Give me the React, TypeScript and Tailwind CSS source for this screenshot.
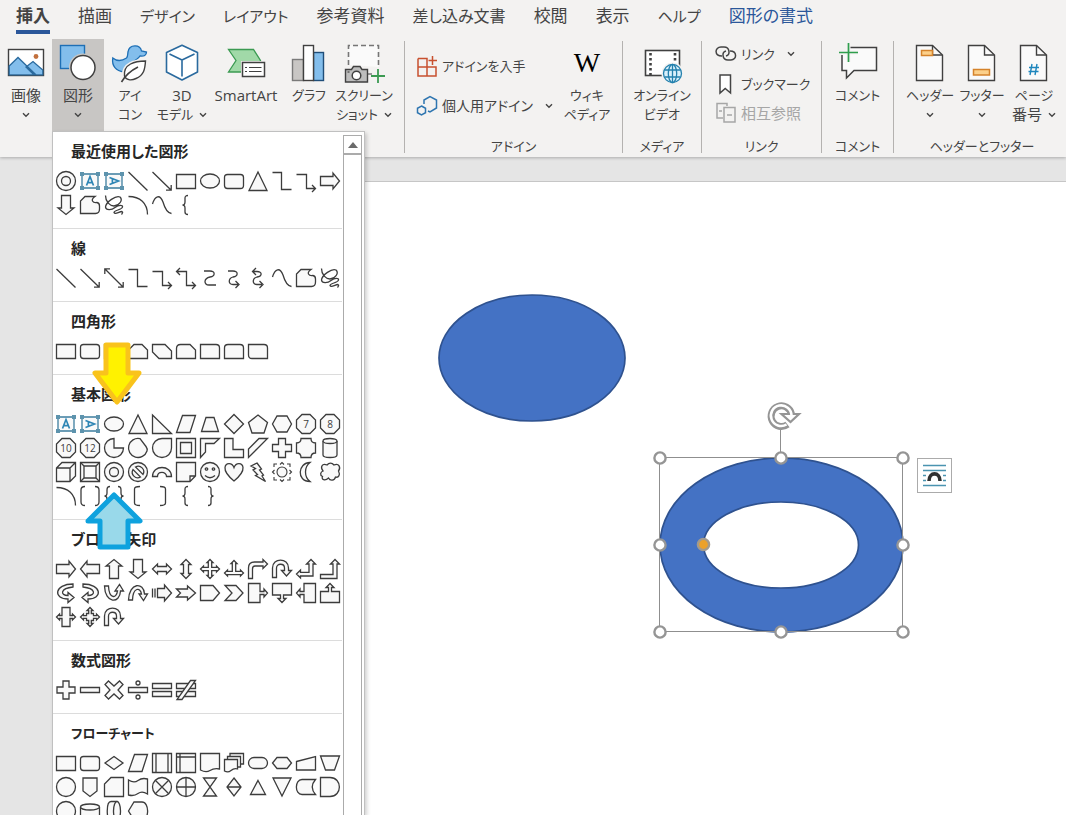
import React from 'react';

const INK = '#404040';

/* ---------- ribbon icons, 40 x 40 ---------- */

const ribbonIcons: Record<string, React.ReactNode> = {
  picture: (
    <>
      <rect x="2.5" y="6.5" width="35" height="26" fill="#fff" stroke={INK} strokeWidth="1.4" />
      <path d="M3.2 23 L12 14.5 L30 31.8 H3.2z M20 24 L27 18.5 L36.8 27 V31.8 H28z" fill="#83beec" stroke="#2a6a9e" strokeWidth="1.3" />
      <circle cx="30" cy="13.5" r="2.4" fill="#c2703d" />
    </>
  ),
  shapes: (
    <>
      <rect x="2.5" y="2.5" width="24" height="23" fill="#83beec" stroke="#1e6fb5" strokeWidth="1.4" />
      <circle cx="25" cy="24.5" r="14" fill="#c8c6c4" />
      <circle cx="25" cy="24.5" r="12" fill="#fff" stroke={INK} strokeWidth="1.5" />
    </>
  ),
  icons: (
    <>
      <path
        d="M2.8 15 C7 18.5 12 18 16.5 15 C18 13.5 17.5 11.5 18 9 C18.5 5 21.5 2.8 25 2.8 C28.5 2.8 31 5 31.5 8 L36.5 9 C36.5 12.5 34 13.5 30 13 C28 16 26 17 21 20 C15 24 14.5 26 14 29 C6 28 1.5 23 2.8 15z"
        fill="#83beec"
        stroke="#1e6fb5"
        strokeWidth="1.3"
      />
      <path d="M35.5 18 C25 18 13 21 14 33 C14.5 37 21 38 26 35.5 C34 32 35 26 35.5 18z" fill="#fff" stroke="#f3f2f1" strokeWidth="4" />
      <path d="M35.5 18 C25 18 13 21 14.5 33 C16 37 21 38 26 35.5 C34 32 35 26 35.5 18z" fill="#fff" stroke={INK} strokeWidth="1.4" />
      <path d="M28 24 C20 28 15 33 11.5 39" fill="none" stroke={INK} strokeWidth="1.6" />
    </>
  ),
  cube: (
    <g fill="#fff" stroke="#2a6a9e" strokeWidth="1.6" strokeLinejoin="round">
      <path d="M20 2.2 L35.5 9.5 V29 L20 37 L4.5 29 V9.5z" />
      <path d="M7.5 11 L20 17 L32.5 11 M20 17 V33.5" fill="none" />
    </g>
  ),
  smartart: (
    <>
      <path d="M2.5 6.5 H27.5 L34.5 17.5 L27 29 H2.5 L10 17.5z" fill="#a1d9a8" stroke="#3b9a52" strokeWidth="1.3" />
      <rect x="15" y="18" width="25" height="17" fill="#f3f2f1" />
      <rect x="16.5" y="19.5" width="22" height="14" fill="#fff" stroke={INK} strokeWidth="1.5" />
      <path d="M19 24.5h2M23 24.5h12.5M19 28.5h2M23 28.5h12.5" stroke={INK} strokeWidth="1.2" />
    </>
  ),
  chart: (
    <g stroke={INK} strokeWidth="1.4">
      <rect x="3.5" y="16.5" width="11" height="21" fill="#c8c6c4" stroke="#7a7a7a" />
      <rect x="24.5" y="9.5" width="10" height="28" fill="#83beec" stroke="#1f4e79" />
      <rect x="14.5" y="2.5" width="10" height="35" fill="#fff" />
    </g>
  ),
  screenshot: (
    <>
      <path d="M4.5 22 V2.5 H34.5 V24" fill="#fafafa" stroke="#767676" strokeWidth="1.6" strokeDasharray="5 3" />
      <path d="M24 31 H28" stroke="#767676" strokeWidth="1.5" />
      <path d="M1.5 26.5 H7.5 L9.5 23.5 H16 L18 26.5 H23.5 V39 H1.5z" fill="#bdbdbd" stroke={INK} strokeWidth="1.4" />
      <circle cx="12.5" cy="32.5" r="4.3" fill="#fff" stroke={INK} strokeWidth="1.5" />
      <path d="M3.5 29h2" stroke={INK} strokeWidth="1.2" />
      <path d="M34 26 V40 M27 33 H41" stroke="#3b9a52" strokeWidth="1.8" />
    </>
  ),
  video: (
    <>
      <rect x="3.5" y="7.5" width="34" height="25" fill="#fff" stroke={INK} strokeWidth="1.6" />
      <path d="M8.5 10 V32 M33 10 V20" stroke={INK} strokeWidth="2.6" strokeDasharray="2.6 2.4" />
      <circle cx="30.5" cy="30.5" r="11" fill="#f3f2f1" />
      <g fill="#d9f0fb" stroke="#2380ad" strokeWidth="1.3">
        <circle cx="30.5" cy="30.5" r="9" />
        <ellipse cx="30.5" cy="30.5" rx="4.2" ry="9" />
        <path d="M30.5 21.5 V39.5 M22.5 27 H38.5 M22.5 34 H38.5" fill="none" />
      </g>
    </>
  ),
  comment: (
    <>
      <path d="M10 4.5 H38.5 V27.5 H16 L8.5 35 V27.5 H4 V12" fill="#fafafa" stroke={INK} strokeWidth="1.5" />
      <path d="M10.5 0 V19 M1 9.5 H20" stroke="#f3f2f1" strokeWidth="4" />
      <path d="M10.5 0 V19 M1 9.5 H20" stroke="#2f9e4d" strokeWidth="1.7" />
    </>
  ),
  header: (
    <>
      <DocOutline />
      <rect x="11.5" y="7.5" width="11" height="5" fill="#fcd08a" stroke="#d5832b" strokeWidth="1.5" />
    </>
  ),
  footer: (
    <>
      <DocOutline />
      <rect x="11.5" y="26.5" width="16" height="5.5" fill="#fcd08a" stroke="#d5832b" strokeWidth="1.5" />
    </>
  ),
  pageNumber: (
    <>
      <DocOutline />
      <path d="M18 21 L16 32 M23 21 L21 32 M15 24.5 H25 M14.5 28.5 H24.5" stroke="#1e86bd" strokeWidth="1.4" />
    </>
  ),
};

function DocOutline() {
  return (
    <>
      <path d="M6.5 2.5 H22.5 L32.5 12 V37.5 H6.5z" fill="#fafafa" stroke={INK} strokeWidth="1.4" />
      <path d="M22.5 2.5 V12 H32" fill="none" stroke={INK} strokeWidth="1.4" />
    </>
  );
}

function Chevron() {
  return (
    <svg width="8" height="6" viewBox="0 0 8 6" className="shrink-0">
      <path d="M1 1.2 L4 4.2 L7 1.2" fill="none" stroke="#444" strokeWidth="1.4" />
    </svg>
  );
}

// kana-only labels are set smaller than labels with kanji or latin
const isKana = (text: string) => /^[\u3040-\u30ff]+$/.test(text);
const labelSize = (text: string) => (isKana(text) ? 'text-[13px]' : 'text-[15px]');

/* ---------- gallery shapes, drawn round 0,0 in a 24 x 24 cell ---------- */

const p = (d: string) => <path d={d} />;
const line = (d: string) => <path d={d} fill="none" />;
const ring = (r: number) => `M${-r} 0 A${r} ${r} 0 1 1 ${r} 0 A${r} ${r} 0 1 1 ${-r} 0z`;
const turn = (deg: number, node: React.ReactNode) => <g transform={`rotate(${deg})`}>{node}</g>;
const flip = (node: React.ReactNode) => <g transform="scale(-1 1)">{node}</g>;

const OCTAGON = 'M-4 -9.5 H4 L9.5 -4 V4 L4 9.5 H-4 L-9.5 4 V-4z';
const ARROW = 'M-9.5 -4.5 H3 V-8 L9.5 0 L3 8 V4.5 H-9.5z';
const DOUBLE_ARROW = 'M-9.5 0 L-4.5 -5 V-2.5 H4.5 V-5 L9.5 0 L4.5 5 V2.5 H-4.5 V5z';
const U_TURN = 'M-9.5 8.5 V-1 C-9.5 -11.5 6.5 -11.5 6.5 -1 V1.5 H9.5 L4.5 7 L-.5 1.5 H2.5 V-1 C2.5 -6 -5.5 -6 -5.5 -1 V8.5z';
const CURVED = 'M7 -9 C-12 -9 -13 6 2 6 V9.5 L8 4.5 L2 -.5 V2.5 C-6 2.5 -6 -4.5 7 -6z';
const CALLOUT_SIDE = 'M-9.5 -9.5 H2 V-1.5 H6 V-4 L9.5 0 L6 4 V1.5 H2 V9.5 H-9.5z';

const numbered = (n: string) => (
  <>
    {p(OCTAGON)}
    <text x="0" y="4" textAnchor="middle" fontSize="10" fill="#404040" stroke="none">
      {n}
    </text>
  </>
);

const textBoxFrame = (
  <>
    {p('M-8 -7 H8 V7 H-8z')}
    <path d="M-10 -9h4v4h-4z M6 -9h4v4h-4z M-10 5h4v4h-4z M6 5h4v4h-4z" fill="#5d93ad" stroke="none" />
  </>
);

const shapes: Record<string, React.ReactNode> = {
  donut: <>{p(ring(9.5))}{p(ring(4.5))}</>,
  textBox: (
    <g stroke="#3d7e9f">
      {textBoxFrame}
      <path d="M-3.5 4.5 L0 -4.5 L3.5 4.5 M-2.4 1.6 H2.4" fill="none" stroke="#2f86b5" strokeWidth="1.7" />
    </g>
  ),
  textBoxVertical: (
    <g stroke="#3d7e9f">
      {textBoxFrame}
      <path d="M-4.5 -3.5 L4.5 0 L-4.5 3.5 M-1.6 -2.4 V2.4" fill="none" stroke="#2f86b5" strokeWidth="1.7" />
    </g>
  ),
  line: line('M-9.5 -9 L9.5 9.5'),
  lineArrow: line('M-9.5 -9 L9 9 M9.2 4 V9.2 H4'),
  lineBoth: line('M-9 -9 L9 9 M9.2 4 V9.2 H4 M-9.2 -4 V-9.2 H-4'),
  rect: p('M-9.5 -6.5 H9.5 V7.5 H-9.5z'),
  roundRect: p('M-6.5 -6.5 H6.5 Q9.5 -6.5 9.5 -3.5 V4.5 Q9.5 7.5 6.5 7.5 H-6.5 Q-9.5 7.5 -9.5 4.5 V-3.5 Q-9.5 -6.5 -6.5 -6.5z'),
  ellipse: <ellipse rx="9.5" ry="7" />,
  triangle: p('M0 -9 L9 9.5 H-9z'),
  elbow: line('M-9.5 -8.5 H-.5 V8.5 H9.5'),
  elbowArrow: line('M-9.5 -6.5 H.5 V7.5 H9 M6 4 L9.5 7.5 L6 11'),
  elbowBoth: line('M-9 -6.5 H.5 V7.5 H9 M6 4 L9.5 7.5 L6 11 M-6 -10 L-9.5 -6.5 L-6 -3'),
  arrowRight: p(ARROW),
  arrowLeft: turn(180, p(ARROW)),
  arrowUp: turn(-90, p(ARROW)),
  arrowDown: turn(90, p(ARROW)),
  freeform: p('M-9.5 8.5 V-4 L-5 -8.5 H5 Q1.5 -6 2.5 -4 Q3.5 -2 7 -2.5 Q9.5 -2 9.5 1 V4 Q9.5 8.5 5.5 8.5z'),
  scribble: line('M-8.5 -9.5 C-8.5 -3 -4 1 0 1 C6 0 9 -5 6 -8 C2 -10 -8 -3 -8.5 2 C-8 6 -2 5 1 2.5 C5 -.5 9 0 8.5 2 C8 5 0 5 0 7.5 C1 10 5 6.5 8 6.5 Q9.5 7 7.5 9.5'),
  arc: line('M-9.5 -8.5 C2 -8.5 9.5 -2 9.5 9.5'),
  curve: line('M-9.5 -1 C-7 -9.5 -2 -11 1 -3 C3 4 5 8 9.5 8.5'),
  sCurve: line('M-6 -7 H0 C5.5 -7 5.5 -2 0 -1 C-6.5 .5 -6.5 7 -1 7 H6'),
  sCurveArrow: line('M-6 -7 H-1 C4.5 -7 4.5 -2 -1 -1 C-6 .5 -6 6.5 -1 6.5 H4 M1.5 3 L5 6.5 L1.5 10'),
  sCurveBoth: line('M-4.5 -6.5 H-1 C4.5 -6.5 4.5 -2 -1 -1 C-6 .5 -6 6.5 -1 6.5 H4 M1.5 3 L5 6.5 L1.5 10 M-2 -10 L-5.5 -6.5 L-2 -3'),
  snipOne: p('M-9.5 -6.5 H4 L9.5 -1 V7.5 H-9.5z'),
  snipTwo: p('M-4 -6.5 H4 L9.5 -1 V7.5 H-9.5 V-1z'),
  snipDiagonal: p('M-9.5 -6.5 H3 L9.5 0 V7.5 H-3 L-9.5 1z'),
  snipRound: p('M-9.5 7.5 V-2.5 Q-9.5 -6.5 -5.5 -6.5 H4 L9.5 -1 V7.5z'),
  roundOne: p('M-9.5 -6.5 H6 Q9.5 -6.5 9.5 -3 V7.5 H-9.5z'),
  roundTwo: p('M-9.5 7.5 V-3 Q-9.5 -6.5 -6 -6.5 H6 Q9.5 -6.5 9.5 -3 V7.5z'),
  roundDiagonal: p('M-9.5 -6.5 H6 Q9.5 -6.5 9.5 -3 V7.5 H-6 Q-9.5 7.5 -9.5 4z'),
  rightTriangle: p('M-9.5 -9 L9.5 9.5 H-9.5z'),
  parallelogram: p('M-3.5 -8.5 H9.5 L4 8.5 H-9.5z'),
  trapezoid: p('M-4 -6.5 H4 L8.5 7.5 H-8.5z'),
  diamond: p('M0 -9.5 L9.5 0 L0 9.5 L-9.5 0z'),
  pentagon: p('M0 -9 L9.5 -1.5 L6 9 H-6 L-9.5 -1.5z'),
  hexagon: p('M-5 -8 H5 L9.5 0 L5 8 H-5 L-9.5 0z'),
  heptagon: numbered('7'),
  octagon: numbered('8'),
  decagon: numbered('10'),
  dodecagon: numbered('12'),
  pie: p('M0 -9.5 A9.5 9.5 0 1 0 9.5 0 H0z'),
  chord: p('M2 -9.3 A9.5 9.5 0 1 0 9 3 Q9.8 1 8 -1.5z'),
  teardrop: p('M9.5 -9.5 V0 A9.5 9.5 0 1 1 0 -9.5z'),
  frame: <>{p('M-9.5 -9.5 H9.5 V9.5 H-9.5z')}{p('M-5.5 -5.5 H5.5 V5.5 H-5.5z')}</>,
  halfFrame: p('M-9.5 -9.5 H9.5 L4 -4.5 H-4.5 V4 L-9.5 9.5z'),
  lShape: p('M-9.5 -9.5 H-1 V1.5 H9.5 V9.5 H-9.5z'),
  diagonalStripe: p('M1 -9.5 H9.5 L-9.5 9.5 V1z'),
  cross: p('M-3.5 -9.5 H3.5 V-3.5 H9.5 V3.5 H3.5 V9.5 H-3.5 V3.5 H-9.5 V-3.5 H-3.5z'),
  plaque: p('M-5 -9.5 H5 Q5 -5 9.5 -5 V5 Q5 5 5 9.5 H-5 Q-5 5 -9.5 5 V-5 Q-5 -5 -5 -9.5z'),
  can: <>{p('M-7 -7 V7 Q-7 9.5 0 9.5 Q7 9.5 7 7 V-7')}<ellipse cy="-7" rx="7" ry="2.5" /></>,
  cube: p('M-9.5 -4 L-4 -9.5 H9.5 V4 L4 9.5 H-9.5z M-9.5 -4 H4 V9.5 M4 -4 L9.5 -9.5'),
  bevel: <>{p('M-9.5 -9.5 H9.5 V9.5 H-9.5z')}{p('M-6 -6 H6 V6 H-6z')}{line('M-9.5 -9.5 L-6 -6 M9.5 -9.5 L6 -6 M-9.5 9.5 L-6 6 M9.5 9.5 L6 6')}</>,
  no: <>{p(ring(9.5))}{p('M-2.5 -5 A5.5 5.5 0 0 1 5 2.5z')}{p('M2.5 5 A5.5 5.5 0 0 1 -5 -2.5z')}</>,
  blockArc: p('M-9.5 4.5 C-9.5 -7.5 9.5 -7.5 9.5 4.5 H4.5 C4.5 -1 -4.5 -1 -4.5 4.5z'),
  foldedCorner: p('M-9.5 -9.5 H9.5 V4 L4 9.5 H-9.5z M4 9.5 V4 H9.5'),
  smile: <>{p(ring(9.5))}{line('M-5 3.5 Q0 8 5 3.5')}<circle cx="-3.5" cy="-3" r="1.2" /><circle cx="3.5" cy="-3" r="1.2" /></>,
  heart: p('M0 9 C-6 4 -9.5 0 -9 -4.5 C-8.5 -9.5 -2 -10 0 -4.5 C2 -10 8.5 -9.5 9 -4.5 C9.5 0 6 4 0 9z'),
  bolt: p('M-1 -9 L3.5 -3 L1.5 -2 L5.5 3 L4 4 L7.5 9.5 L-2.5 3.5 L-.5 2.5 L-5 -2 L-2.5 -3.5 L-7 -6z'),
  sun: (
    <g strokeWidth="1.1">
      <circle r="5" />
      {[0, 90, 180, 270].map((a) => (
        <g key={a} transform={`rotate(${a})`}>
          {line('M-2 -7.5 L0 -9.5 L2 -7.5 M5 -8 L8 -8 L8 -5')}
        </g>
      ))}
    </g>
  ),
  moon: p('M4 -9.5 C-8 -9.5 -10 9.5 4 9.5 C-2 5 -2 -5 4 -9.5z'),
  cloud: p('M-7 -1 C-10 -5 -8 -9 -3 -7 C-1 -9.5 2 -9.5 4 -7 C9 -9.5 11 -4 8.5 -1 C10.5 3 8.5 6 5.5 5 C4.5 9 0 9 -1.5 6 C-5 9.5 -9 7.5 -7.5 4.5 C-10.5 3 -9.5 0 -7 -1z'),
  bracketPair: line('M-5 -9.5 Q-9 -9.5 -9 -6 V6 Q-9 9.5 -5 9.5 M5 -9.5 Q9 -9.5 9 -6 V6 Q9 9.5 5 9.5'),
  bracePair: line('M-4 -9.5 Q-7 -9.5 -7 -6 V-3 Q-7 0 -9.5 0 Q-7 0 -7 3 V6 Q-7 9.5 -4 9.5 M4 -9.5 Q7 -9.5 7 -6 V-3 Q7 0 9.5 0 Q7 0 7 3 V6 Q7 9.5 4 9.5'),
  bracketLeft: line('M2 -9.5 Q-3.5 -9.5 -3.5 -7 V7 Q-3.5 9.5 2 9.5'),
  bracketRight: line('M-2 -9.5 Q3.5 -9.5 3.5 -7 V7 Q3.5 9.5 -2 9.5'),
  braceLeft: line('M2 -9.5 Q-1 -9.5 -1 -7 V-3 Q-1 0 -3.5 0 Q-1 0 -1 3 V7 Q-1 9.5 2 9.5'),
  braceRight: line('M-2 -9.5 Q1 -9.5 1 -7 V-3 Q1 0 3.5 0 Q1 0 1 3 V7 Q1 9.5 -2 9.5'),
  arrowLeftRight: p(DOUBLE_ARROW),
  arrowUpDown: turn(90, p(DOUBLE_ARROW)),
  arrowQuad: p('M0 -9.5 L3 -6.5 H1.7 V-1.7 H6.5 V-3 L9.5 0 L6.5 3 V1.7 H1.7 V6.5 H3 L0 9.5 L-3 6.5 H-1.7 V1.7 H-6.5 V3 L-9.5 0 L-6.5 -3 V-1.7 H-1.7 V-6.5 H-3z'),
  arrowTriple: p('M0 -8.5 L3 -5.5 H1.7 V2.3 H6.5 V1 L9.5 4 L6.5 7 V5.7 H-6.5 V7 L-9.5 4 L-6.5 1 V2.3 H-1.7 V-5.5 H-3z'),
  arrowBent: p('M-9.5 9.5 V-1 Q-9.5 -7 -3.5 -7 H5 V-9.5 L9.5 -5 L5 -.5 V-3 H-3 Q-5.5 -3 -5.5 0 V9.5z'),
  arrowUTurn: p(U_TURN),
  arrowLeftUp: p('M-9.5 5 L-5.5 1 V3.3 H3 V-5 H.5 L5 -9.5 L9.5 -5 H7 V7 H-5.5 V9z'),
  arrowBentUp: p('M-9.5 5.5 H3 V-5 H.5 L5 -9.5 L9.5 -5 H7 V9.5 H-9.5z'),
  arrowCurvedRight: p(CURVED),
  arrowCurvedLeft: flip(p(CURVED)),
  arrowCurvedUp: p('M-9.5 -7 C-9 11 6 11 6.5 -2 H9.5 L5.5 -8.5 L1 -2 H3.5 C2.5 6 -5 6 -5.5 -7z'),
  arrowCurvedDown: p('M-9.5 7 C-9 -11 6 -11 6.5 1 H9.5 L5.5 7.5 L1 1 H3.5 C2.5 -6 -5 -6 -5.5 7z'),
  arrowStriped: p('M-9.5 -4.5 V4.5 M-7 -4.5 V4.5 M-4.5 -4.5 H2.5 V-8 L9.5 0 L2.5 8 V4.5 H-4.5z'),
  arrowNotched: p('M-9.5 -4 H1.5 V-7 L9.5 0 L1.5 7 V4 H-9.5 L-5.5 0z'),
  arrowPentagon: p('M-9.5 -7.5 H3 L9.5 0 L3 7.5 H-9.5z'),
  chevron: p('M-9 -7.5 H2 L9 0 L2 7.5 H-9 L-2 0z'),
  calloutRight: p(CALLOUT_SIDE),
  calloutDown: p('M-9.5 -9.5 H9.5 V2 H1.5 V5.5 H4 L0 9.5 L-4 5.5 H-1.5 V2 H-9.5z'),
  calloutLeft: flip(p(CALLOUT_SIDE)),
  calloutUp: p('M-9.5 9.5 H9.5 V-1.5 H1.5 V-5.5 H4 L0 -9.5 L-4 -5.5 H-1.5 V-1.5 H-9.5z'),
  calloutLeftRight: p('M-4 -9.5 H4 V-1.5 H6.5 V-3 L9.5 0 L6.5 3 V1.5 H4 V9.5 H-4 V1.5 H-6.5 V3 L-9.5 0 L-6.5 -3 V-1.5 H-4z'),
  calloutQuad: p('M-3.5 -3.5 H-1.3 V-6.5 H-3 L0 -9.5 L3 -6.5 H1.3 V-3.5 H3.5 V-1.3 H6.5 V-3 L9.5 0 L6.5 3 V1.3 H3.5 V3.5 H1.3 V6.5 H3 L0 9.5 L-3 6.5 H-1.3 V3.5 H-3.5 V1.3 H-6.5 V3 L-9.5 0 L-6.5 -3 V-1.3 H-3.5z'),
  arrowCircular: p(U_TURN),
  mathPlus: p('M-3 -9 H3 V-3 H9 V3 H3 V9 H-3 V3 H-9 V-3 H-3z'),
  mathMinus: p('M-9.5 -2.5 H9.5 V2.5 H-9.5z'),
  mathMultiply: p('M-5.5 -9 L0 -4 L5.5 -9 L9 -5.5 L4 0 L9 5.5 L5.5 9 L0 4 L-5.5 9 L-9 5.5 L-4 0 L-9 -5.5z'),
  mathDivide: <>{p('M-9.5 -2.5 H9.5 V2.5 H-9.5z')}<circle cy="-7" r="2" /><circle cy="7" r="2" /></>,
  mathEqual: p('M-9.5 -6.5 H9.5 V-1.5 H-9.5z M-9.5 1.5 H9.5 V6.5 H-9.5z'),
  mathNotEqual: <>{p('M-9.5 -6.5 H9.5 V-1.5 H-9.5z M-9.5 1.5 H9.5 V6.5 H-9.5z')}{p('M4.5 -9.5 H9.5 L-4 9.5 H-9z')}</>,
  flowDecision: p('M0 -6.5 L9 0 L0 6.5 L-9 0z'),
  flowPredefined: p('M-9.5 -9.5 H9.5 V9.5 H-9.5z M-6 -9.5 V9.5 M6 -9.5 V9.5'),
  flowInternal: p('M-9.5 -9.5 H9.5 V9.5 H-9.5z M-6 -9.5 V9.5 M-9.5 -6 H9.5'),
  flowDocument: p('M-9.5 -9.5 H9.5 V6 Q4 5 0 7.5 T-9.5 7z'),
  flowMultidocument: <>{p('M-4 -9.5 H9.5 V1 H-4z')}{p('M-6.5 -6.5 H6.5 V4 H-6.5z')}{p('M-9.5 -3.5 H3.5 V6 Q0 5 -3 7.5 T-9.5 8z')}</>,
  flowTerminator: <rect x="-9.5" y="-5.5" width="19" height="11" rx="5.5" />,
  flowPreparation: p('M-5 -5.5 H5 L9.5 0 L5 5.5 H-5 L-9.5 0z'),
  flowManualInput: p('M-9.5 -1.5 L9.5 -6.5 V7 H-9.5z'),
  flowManualOperation: p('M-9.5 -7 H9.5 L4.5 7 H-4.5z'),
  circle: <circle r="9.5" />,
  flowOffPage: p('M-7 -9 H7 V4 L0 9.5 L-7 4z'),
  flowCard: p('M-3 -9.5 H9.5 V9.5 H-9.5 V-3z'),
  flowTape: p('M-9.5 -7 Q-4 -3.5 0 -6.5 T9.5 -8 V7 Q4 3.5 0 6.5 T-9.5 8z'),
  flowSumming: <>{p(ring(9.5))}{line('M-6.7 -6.7 L6.7 6.7 M6.7 -6.7 L-6.7 6.7')}</>,
  flowOr: <>{p(ring(9.5))}{line('M0 -9.5 V9.5 M-9.5 0 H9.5')}</>,
  flowCollate: p('M-6.5 -9 H6.5 L-6.5 9 H6.5z'),
  flowSort: p('M0 -9 L7 0 L0 9 L-7 0z M-7 0 H7'),
  flowExtract: p('M0 -6.5 L7.5 7.5 H-7.5z'),
  flowMerge: p('M-9 -9 H9 L0 9z'),
  flowStored: p('M-4 -7.5 H9.5 Q3 0 9.5 7.5 H-4 C-11.5 7.5 -11.5 -7.5 -4 -7.5z'),
  flowDelay: p('M-9.5 -9.5 H0 C12.5 -9.5 12.5 9.5 0 9.5 H-9.5z'),
  flowDisk: <>{p('M-9.5 -4 V6 Q-9.5 9 0 9 T9.5 6 V-4')}<ellipse cy="-4" rx="9.5" ry="3" /></>,
  flowDirect: <>{p('M3.5 -9.5 H-3 C-8 -9.5 -8 9.5 -3 9.5 H3.5')}<ellipse cx="3" rx="3.5" ry="9.5" /></>,
  flowDisplay: p('M-9.5 0 L-4 -9 H4 C11.5 -9 11.5 9 4 9 H-4z'),
};

interface GallerySection {
  title: string;
  items: string[];
}

const gallery: GallerySection[] = [
  {
    title: '最近使用した図形',
    items: [
      'donut', 'textBox', 'textBoxVertical', 'line', 'lineArrow', 'rect', 'ellipse', 'roundRect', 'triangle', 'elbow', 'elbowArrow', 'arrowRight',
      'arrowDown', 'freeform', 'scribble', 'arc', 'curve', 'braceLeft',
    ],
  },
  {
    title: '線',
    items: ['line', 'lineArrow', 'lineBoth', 'elbow', 'elbowArrow', 'elbowBoth', 'sCurve', 'sCurveArrow', 'sCurveBoth', 'curve', 'freeform', 'scribble'],
  },
  {
    title: '四角形',
    items: ['rect', 'roundRect', 'snipOne', 'snipTwo', 'snipDiagonal', 'snipRound', 'roundOne', 'roundTwo', 'roundDiagonal'],
  },
  {
    title: '基本図形',
    items: [
      'textBox', 'textBoxVertical', 'ellipse', 'triangle', 'rightTriangle', 'parallelogram', 'trapezoid', 'diamond', 'pentagon', 'hexagon', 'heptagon', 'octagon',
      'decagon', 'dodecagon', 'pie', 'chord', 'teardrop', 'frame', 'halfFrame', 'lShape', 'diagonalStripe', 'cross', 'plaque', 'can',
      'cube', 'bevel', 'donut', 'no', 'blockArc', 'foldedCorner', 'smile', 'heart', 'bolt', 'sun', 'moon', 'cloud',
      'arc', 'bracketPair', 'bracePair', 'bracketLeft', 'bracketRight', 'braceLeft', 'braceRight',
    ],
  },
  {
    title: 'ブロック矢印',
    items: [
      'arrowRight', 'arrowLeft', 'arrowUp', 'arrowDown', 'arrowLeftRight', 'arrowUpDown', 'arrowQuad', 'arrowTriple', 'arrowBent', 'arrowUTurn', 'arrowLeftUp', 'arrowBentUp',
      'arrowCurvedRight', 'arrowCurvedLeft', 'arrowCurvedUp', 'arrowCurvedDown', 'arrowStriped', 'arrowNotched', 'arrowPentagon', 'chevron', 'calloutRight', 'calloutDown', 'calloutLeft', 'calloutUp',
      'calloutLeftRight', 'calloutQuad', 'arrowCircular',
    ],
  },
  {
    title: '数式図形',
    items: ['mathPlus', 'mathMinus', 'mathMultiply', 'mathDivide', 'mathEqual', 'mathNotEqual'],
  },
  {
    title: 'フローチャート',
    items: [
      'rect', 'roundRect', 'flowDecision', 'parallelogram', 'flowPredefined', 'flowInternal', 'flowDocument', 'flowMultidocument', 'flowTerminator', 'flowPreparation', 'flowManualInput', 'flowManualOperation',
      'circle', 'flowOffPage', 'flowCard', 'flowTape', 'flowSumming', 'flowOr', 'flowCollate', 'flowSort', 'flowExtract', 'flowMerge', 'flowStored', 'flowDelay',
      'circle', 'flowDisk', 'flowDirect', 'flowDisplay',
    ],
  },
];

function ShapesMenu() {
  return (
    <div className="absolute top-[131px] bottom-0 left-[52px] z-20 flex w-[313px] overflow-hidden border border-b-0 border-[#c0c0c0] bg-white shadow-[2px_2px_4px_rgba(0,0,0,0.18)]">
      <div className="w-[290px] shrink-0 pr-px">
        {gallery.map((section) => (
          <section key={section.title} className="border-b border-[#dcdcdc] pb-[11px]">
            <h3 className={`flex h-[37px] items-center pt-px pl-[18px] leading-5 font-bold text-[#262626] ${labelSize(section.title)}`}>
              {section.title}
            </h3>
            <div className="grid grid-cols-[repeat(12,24px)] pl-px">
              {section.items.map((name, i) => (
                <button key={i} type="button" aria-label={name} className="size-6">
                  <svg width="24" height="24" viewBox="-12 -12 24 24" fill="#f9f9f9" stroke="#3c3c3c" strokeWidth="1.3">
                    {shapes[name]}
                  </svg>
                </button>
              ))}
            </div>
          </section>
        ))}
      </div>
      <div className="mt-[3px] flex w-[19px] shrink-0 flex-col border border-b-0 border-[#ababab] bg-white">
        <button type="button" aria-label="上へ" className="flex h-[19px] shrink-0 items-center justify-center border-b-2 border-[#ababab]">
          <svg width="10" height="6" viewBox="0 0 10 6">
            <path d="M5 0 L10 6 H0z" fill="#6b6b6b" />
          </svg>
        </button>
      </div>

      <svg className="pointer-events-none absolute top-[208px] left-[38px]" width="54" height="68" viewBox="0 0 54 68">
        <path d="M15 5 H37 V33 H48 L26 62 L4 33 H15z" fill="#fff200" stroke="#f9c31c" strokeWidth="5" strokeLinejoin="round" />
      </svg>
      <svg className="pointer-events-none absolute top-[358px] left-[30px]" width="62" height="62" viewBox="0 0 62 62">
        <path d="M31 5 L57 31 H45 V57 H17 V31 H5z" fill="#99d9ea" stroke="#0ea2de" strokeWidth="5" strokeLinejoin="round" />
      </svg>
    </div>
  );
}

/* ---------- ribbon ---------- */

const tabs = ['挿入', '描画', 'デザイン', 'レイアウト', '参考資料', '差し込み文書', '校閲', '表示', 'ヘルプ', '図形の書式'];

function tabClass(label: string) {
  if (label === '挿入') return 'text-[17px] font-bold border-[#2b579a]';
  if (label === '図形の書式') return 'text-[17px] border-transparent text-[#2b579a]';
  if (label === '差し込み文書') return 'text-[16px] border-transparent';
  return isKana(label) ? 'text-[15px] border-transparent' : 'text-[17px] border-transparent';
}

interface BigButtonProps {
  icon: string;
  lines: string[];
  width: string;
  menu?: boolean;
  active?: boolean;
}

function BigButton({ icon, lines, width, menu, active }: BigButtonProps) {
  const last = lines.length - 1;
  return (
    <button
      type="button"
      className={`flex h-[92px] shrink-0 flex-col items-center pt-1 ${width} ${active ? 'bg-[#c8c6c4]' : ''}`}
    >
      {icon === 'wiki' ? (
        <span className="flex h-10 items-center font-['Liberation_Serif',serif] text-[28px] leading-10 text-black">W</span>
      ) : (
        <svg width="40" height="40" viewBox="0 0 40 40" className="shrink-0 overflow-visible">
          {ribbonIcons[icon]}
        </svg>
      )}
      <span className="mt-[3px] flex flex-col items-center whitespace-nowrap">
        {lines.map((text, i) => (
          <span key={i} className={`flex h-[19px] items-center gap-[6px] leading-[19px] ${labelSize(text)}`}>
            {text}
            {menu && i === last && last > 0 && <Chevron />}
          </span>
        ))}
        {menu && last === 0 && (
          <span className="flex h-[19px] items-center">
            <Chevron />
          </span>
        )}
      </span>
    </button>
  );
}

function Group({ label, className, children }: { label?: string; className: string; children: React.ReactNode }) {
  return (
    <div className={`flex shrink-0 flex-col ${className}`}>
      <div className="flex h-[97px] justify-center">{children}</div>
      {label && <div className="text-center text-[13px] leading-5 whitespace-nowrap">{label}</div>}
    </div>
  );
}

function Divider() {
  return <div className="mt-[2px] h-[112px] w-px shrink-0 bg-[#b4b2b0]" />;
}

function SmallButton({ icon, label, menu, disabled, className }: { icon: React.ReactNode; label: string; menu?: boolean; disabled?: boolean; className: string }) {
  return (
    <button type="button" disabled={disabled} className={`flex items-center gap-1 leading-5 whitespace-nowrap disabled:text-[#a6a6a6] ${className}`}>
      <svg width="22" height="22" viewBox="0 0 22 22" fill="none" className="shrink-0">
        {icon}
      </svg>
      {label}
      {menu && (
        <span className="ml-2">
          <Chevron />
        </span>
      )}
    </button>
  );
}

function Ribbon() {
  return (
    <header className="relative z-10 shrink-0 overflow-hidden bg-[#f3f2f1] text-[#444] shadow-[0_1px_3px_rgba(0,0,0,0.25)]">
      <nav className="flex h-[39px] gap-7 pl-4">
        {tabs.map((tab) => (
          <button key={tab} type="button" className={`h-[34px] shrink-0 border-b-4 pt-[2px] leading-7 whitespace-nowrap ${tabClass(tab)}`}>
            {tab}
          </button>
        ))}
      </nav>
      <div className="flex h-[118px]">
        <Group className="w-[404px]">
          <div className="flex w-full">
            <BigButton icon="picture" lines={['画像']} width="w-[52px]" menu />
            <BigButton icon="shapes" lines={['図形']} width="w-[52px]" menu active />
            <BigButton icon="icons" lines={['アイ', 'コン']} width="w-[52px]" />
            <BigButton icon="cube" lines={['3D', 'モデル']} width="w-[52px]" menu />
            <BigButton icon="smartart" lines={['SmartArt']} width="w-[76px]" />
            <BigButton icon="chart" lines={['グラフ']} width="w-[50px]" />
            <BigButton icon="screenshot" lines={['スクリーン', 'ショット']} width="w-[60px]" menu />
          </div>
        </Group>
        <Divider />
        <Group label="アドイン" className="w-[217px]">
          <div className="flex w-[147px] flex-col pt-[7px] pl-[6px]">
            <SmallButton
              label="アドインを入手"
              className="h-10 text-[13px]"
              icon={
                <g stroke="#c8502f" strokeWidth="1.5">
                  <path d="M2 3.5 H11 V21 M2 3.5 V21 H20 V12 H2" />
                  <path d="M16.5 1 V10 M12.5 5.5 H21" />
                </g>
              }
            />
            <SmallButton
              label="個人用アドイン"
              className="h-10 text-[14px]"
              menu
              icon={
                <g stroke="#2e75b0" strokeWidth="1.5">
                  <path d="M8 9 V5 L14 1.5 L20.5 5 V13 L14 17 L12 16" />
                  <path d="M5.5 11 L9.5 13.3 V17.7 L5.5 20 L1.5 17.7 V13.3z" />
                </g>
              }
            />
          </div>
          <BigButton icon="wiki" lines={['ウィキ', 'ペディア']} width="w-[60px]" />
        </Group>
        <Divider />
        <Group label="メディア" className="w-[78px]">
          <BigButton icon="video" lines={['オンライン', 'ビデオ']} width="w-[78px]" />
        </Group>
        <Divider />
        <Group label="リンク" className="w-[119px]">
          <div className="flex w-full flex-col pl-[13px]">
            <SmallButton
              label="リンク"
              className="h-[30px] text-[13px]"
              menu
              icon={
                <g stroke="#444" strokeWidth="1.5">
                  <path d="M7 13 C-1 13 -.5 4 6 4 H9 C15 4 15.5 12 11 13" />
                  <path d="M15 8 C22.5 8 22 17 16 17 H13 C7 17 6.5 9 11 8" />
                </g>
              }
            />
            <SmallButton label="ブックマーク" className="h-[29px] text-[13px]" icon={<path d="M5 2 H15.5 V20 L10.2 15.5 L5 20z" fill="#fff" stroke="#444" strokeWidth="1.5" />} />
            <SmallButton
              label="相互参照"
              className="h-[29px] text-[15px]"
              disabled
              icon={
                <g stroke="#a6a6a6" strokeWidth="1.5">
                  <path d="M8 16 H2 V1.5 H12 V4 M4 9 H7" />
                  <path d="M9 5.5 H20 V20 H9z M12 13 H17" />
                </g>
              }
            />
          </div>
        </Group>
        <Divider />
        <Group label="コメント" className="w-[71px]">
          <BigButton icon="comment" lines={['コメント']} width="w-[71px]" />
        </Group>
        <Divider />
        <Group label="ヘッダーとフッター" className="w-[172px] pl-1">
          <BigButton icon="header" lines={['ヘッダー']} width="w-[52px]" menu />
          <BigButton icon="footer" lines={['フッター']} width="w-[52px]" menu />
          <BigButton icon="pageNumber" lines={['ページ', '番号']} width="w-[52px]" menu />
        </Group>
      </div>
    </header>
  );
}

/* ---------- document ---------- */

const handles = [
  [20, 68], [141, 68], [263, 68],
  [20, 155], [263, 155],
  [20, 242], [141, 242], [263, 242],
];

function Canvas() {
  return (
    <main className="flex min-h-0 flex-1 pt-6 pl-[200px]">
      <div className="relative flex-1 overflow-hidden border-t border-[#c6c6c6] bg-white">
        <svg className="absolute top-[110px] left-[236px]" width="192" height="132" viewBox="0 0 192 132">
          <ellipse cx="96" cy="66" rx="93" ry="63" fill="#4472c4" stroke="#2f528f" strokeWidth="1.7" />
        </svg>
        <svg className="absolute top-[208px] left-[440px]" width="275" height="255" viewBox="0 0 275 255">
          <path
            d="M20 155 A121.5 87 0 1 1 263 155 A121.5 87 0 1 1 20 155z M63.5 155 A77.5 43 0 1 0 218.5 155 A77.5 43 0 1 0 63.5 155z"
            fill="#4472c4"
            stroke="#2f528f"
            strokeWidth="1.7"
          />
          <path d="M19.5 67.5 H262.5 V241.5 H19.5z M140.5 67.5 V38" fill="none" stroke="#8f8f8f" strokeWidth="1" />
          <g fill="#fff" stroke="#959595" strokeWidth="2.4">
            {handles.map(([x, y]) => (
              <circle key={`${x}-${y}`} cx={x} cy={y} r="5.6" />
            ))}
          </g>
          <circle cx="63.5" cy="154.5" r="5.6" fill="#eba12a" stroke="#a39a8c" strokeWidth="2.4" />
          <g fill="none" stroke="#959595">
            <path d="M147.5 34.5 A10.3 10.3 0 1 1 151.5 24" strokeWidth="7" />
            <path d="M141.5 24 H159 L150.5 32z" strokeWidth="2.2" fill="#fff" />
            <path d="M146.5 34.5 A10.3 10.3 0 1 1 151.5 25.5" strokeWidth="2.6" stroke="#fff" />
          </g>
        </svg>
        <button type="button" aria-label="レイアウト オプション" className="absolute top-[276px] left-[717px] flex size-[35px] items-center justify-center border border-[#ababab] bg-white">
          <svg width="23" height="23" viewBox="0 0 23 23" fill="none">
            <path d="M0 1.5 H23 M0 6.5 H23 M0 11.5 H3 M20 11.5 H23 M0 16.5 H3 M20 16.5 H23 M0 21.5 H23" stroke="#4a93b0" strokeWidth="1.6" />
            <path d="M6 17 C6 7.5 17 7.5 17 17" stroke="#303030" strokeWidth="3.6" />
          </svg>
        </button>
      </div>
    </main>
  );
}

export default function App() {
  return (
    <div className="relative flex h-screen flex-col overflow-hidden bg-[#e5e5e5] font-['Open_Sans','Noto_Sans_CJK_JP',sans-serif] [font-feature-settings:'palt']">
      <Ribbon />
      <Canvas />
      <ShapesMenu />
    </div>
  );
}
